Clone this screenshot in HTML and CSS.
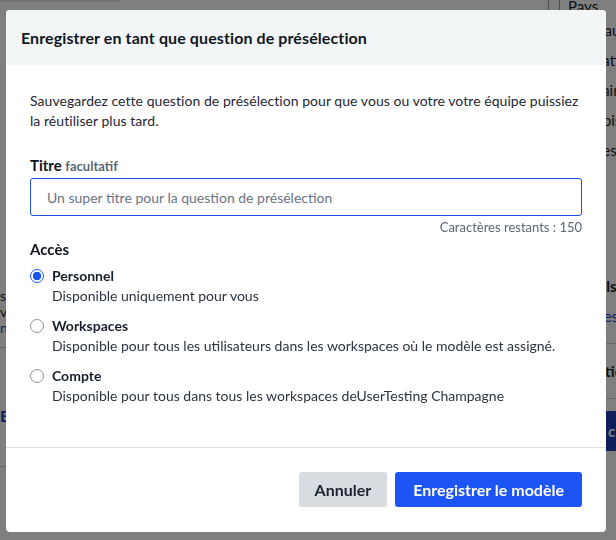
FILE: index.html
```html
<!DOCTYPE html>
<html lang="fr">
<head>
    <meta charset="UTF-8">
    <meta name="viewport" content="width=device-width, initial-scale=1.0">
    <title>Enregistrer en tant que question de présélection</title>
    <link rel="stylesheet" href="styles.css">
</head>
<body>
    <!-- Page behind the dialog -->
    <div class="page">
        <div class="page-main">
            <div class="top-strip"></div>
            <div class="left-rows">
                <div class="row">s</div>
                <div class="row">v</div>
                <div class="row link">n:</div>
                <hr>
                <div class="row link big">E</div>
                <hr>
            </div>
        </div>
        <div class="page-side">
            <label class="side-check"><span class="box"></span> Pays</label>
            <div class="side-item">Animaux</div>
            <div class="side-item">Éducation</div>
            <div class="side-item">Domaine</div>
            <div class="side-item">Emplois</div>
            <div class="side-item">Filières</div>
            <div class="side-item bold gap">Détails</div>
            <div class="side-item link">Voir les c</div>
            <hr>
            <div class="side-item bold">Question</div>
            <hr>
            <div class="side-btn">c</div>
        </div>
    </div>

    <div class="backdrop"></div>

    <!-- Dialog -->
    <div class="modal">
        <div class="modal-header">
            <h2>Enregistrer en tant que question de présélection</h2>
        </div>

        <div class="modal-body">
            <p class="intro">Sauvegardez cette question de présélection pour que vous ou votre votre équipe puissiez la réutiliser plus tard.</p>

            <label class="field-label" for="title">Titre <span class="optional">facultatif</span></label>
            <input class="text-input" id="title" type="text" placeholder="Un super titre pour la question de présélection">
            <div class="counter">Caractères restants : 150</div>

            <div class="field-label access">Accès</div>
            <div class="radio-list">
                <label class="radio-item">
                    <input type="radio" name="access" value="personal" checked>
                    <span class="radio-text">
                        <span class="radio-title">Personnel</span>
                        <span class="radio-desc">Disponible uniquement pour vous</span>
                    </span>
                </label>
                <label class="radio-item">
                    <input type="radio" name="access" value="workspaces">
                    <span class="radio-text">
                        <span class="radio-title">Workspaces</span>
                        <span class="radio-desc">Disponible pour tous les utilisateurs dans les workspaces où le modèle est assigné.</span>
                    </span>
                </label>
                <label class="radio-item">
                    <input type="radio" name="access" value="account">
                    <span class="radio-text">
                        <span class="radio-title">Compte</span>
                        <span class="radio-desc">Disponible pour tous dans tous les workspaces deUserTesting Champagne</span>
                    </span>
                </label>
            </div>
        </div>

        <div class="modal-footer">
            <button class="btn btn-secondary" type="button">Annuler</button>
            <button class="btn btn-primary" type="button">Enregistrer le modèle</button>
        </div>
    </div>
</body>
</html>
```

FILE: styles.css
```css
* {
    box-sizing: border-box;
}

body {
    margin: 0;
    font-family: Lato, "Noto Sans", Arial, sans-serif;
    color: #1b2330;
    background-color: #fff;
    width: 616px;
    height: 540px;
    overflow: hidden;
}

/* background page */
.page {
    display: flex;
    height: 540px;
}

.page-main {
    flex: 1;
}

.top-strip {
    width: 120px;
    height: 2px;
    background-color: #e6e6e6;
}

.left-rows {
    padding-top: 285px;
    font-size: 14px;
    color: #222;
}

.left-rows .row {
    height: 16px;
}

.left-rows hr,
.page-side hr {
    border: none;
    border-top: 1px solid #ccc;
    margin: 12px 0;
}

.link {
    color: #1c3fb8;
}

.big {
    font-size: 16px;
    font-weight: 700;
    margin: 58px 0 44px;
}

.page-side {
    width: 76px;
    font-size: 15px;
    color: #222;
}

.side-check {
    display: flex;
    align-items: center;
    gap: 8px;
    margin-top: -3px;
    padding-left: 8px;
}

.side-check .box {
    width: 12px;
    height: 14px;
    border: 1px solid #999;
    border-radius: 2px;
}

.side-item {
    padding-left: 30px;
    height: 30px;
    line-height: 30px;
    white-space: nowrap;
}

.side-item.bold {
    font-weight: 700;
}

.side-item.gap {
    margin-top: 106px;
}

.side-btn {
    margin: 10px 0 0 0;
    height: 40px;
    background-color: #1c3fb8;
    color: #fff;
    font-weight: 700;
    line-height: 40px;
    padding-left: 68px;
}

.backdrop {
    position: fixed;
    inset: 0;
    background-color: rgba(0, 0, 0, 0.5);
}

/* dialog */
.modal {
    position: fixed;
    top: 10px;
    left: 6px;
    width: 600px;
    height: 522px;
    background-color: #fff;
    border-radius: 4px;
    overflow: hidden;
    display: flex;
    flex-direction: column;
}

.modal-header {
    background-color: #f3f6f7;
    height: 55px;
    padding: 0 15px;
    display: flex;
    align-items: center;
}

.modal-header h2 {
    margin: 0;
    font-size: 16px;
    font-weight: 700;
    letter-spacing: 0.1px;
    color: #11161d;
}

.modal-body {
    flex: 1;
    padding: 26px 24px 0;
}

.intro {
    margin: 0 0 24px;
    font-size: 14px;
    line-height: 20px;
    letter-spacing: 0.05px;
    color: #1f2733;
}

.field-label {
    display: block;
    font-size: 15px;
    font-weight: 700;
    color: #0f141b;
    line-height: 20px;
    margin-bottom: 2px;
}

.optional {
    font-size: 13px;
    color: #5b6574;
}

.text-input {
    display: block;
    width: 100%;
    height: 38px;
    padding: 0 16px;
    border: 1px solid #1d4fe0;
    border-radius: 3px;
    font-family: inherit;
    font-size: 14px;
    color: #1b2330;
    outline: none;
}

.text-input::placeholder {
    color: #6b7482;
}

.counter {
    text-align: right;
    font-size: 13px;
    color: #5b6574;
    line-height: 20px;
    margin-top: 1px;
}

.access {
    margin-top: 2px;
    margin-bottom: 7px;
}

.radio-list {
    display: flex;
    flex-direction: column;
    gap: 10px;
}

.radio-item {
    display: flex;
    gap: 8px;
    cursor: pointer;
}

.radio-item input {
    appearance: none;
    margin: 3px 0 0;
    width: 14px;
    height: 14px;
    border: 1px solid #8a919b;
    border-radius: 50%;
    flex-shrink: 0;
}

.radio-item input:checked {
    border: 1px solid #1d55f5;
    background: radial-gradient(circle, #1d55f5 0 4px, #fff 4.5px);
}

.radio-text {
    display: flex;
    flex-direction: column;
    font-size: 14px;
    line-height: 20px;
}

.radio-title {
    font-weight: 700;
    color: #16202c;
}

.radio-desc {
    color: #2b3442;
}

.modal-footer {
    border-top: 1px solid #dcdfe3;
    height: 85px;
    display: flex;
    justify-content: flex-end;
    align-items: flex-start;
    gap: 8px;
    padding: 24px 24px 0;
}

.btn {
    height: 35px;
    padding: 0 16px;
    border: none;
    border-radius: 3px;
    font-family: inherit;
    font-size: 16px;
    font-weight: 700;
    cursor: pointer;
}

.btn-secondary {
    background-color: #d9dce0;
    color: #1b2330;
}

.btn-primary {
    background-color: #1d55f5;
    color: #fff;
    padding: 0 18px;
}
```
